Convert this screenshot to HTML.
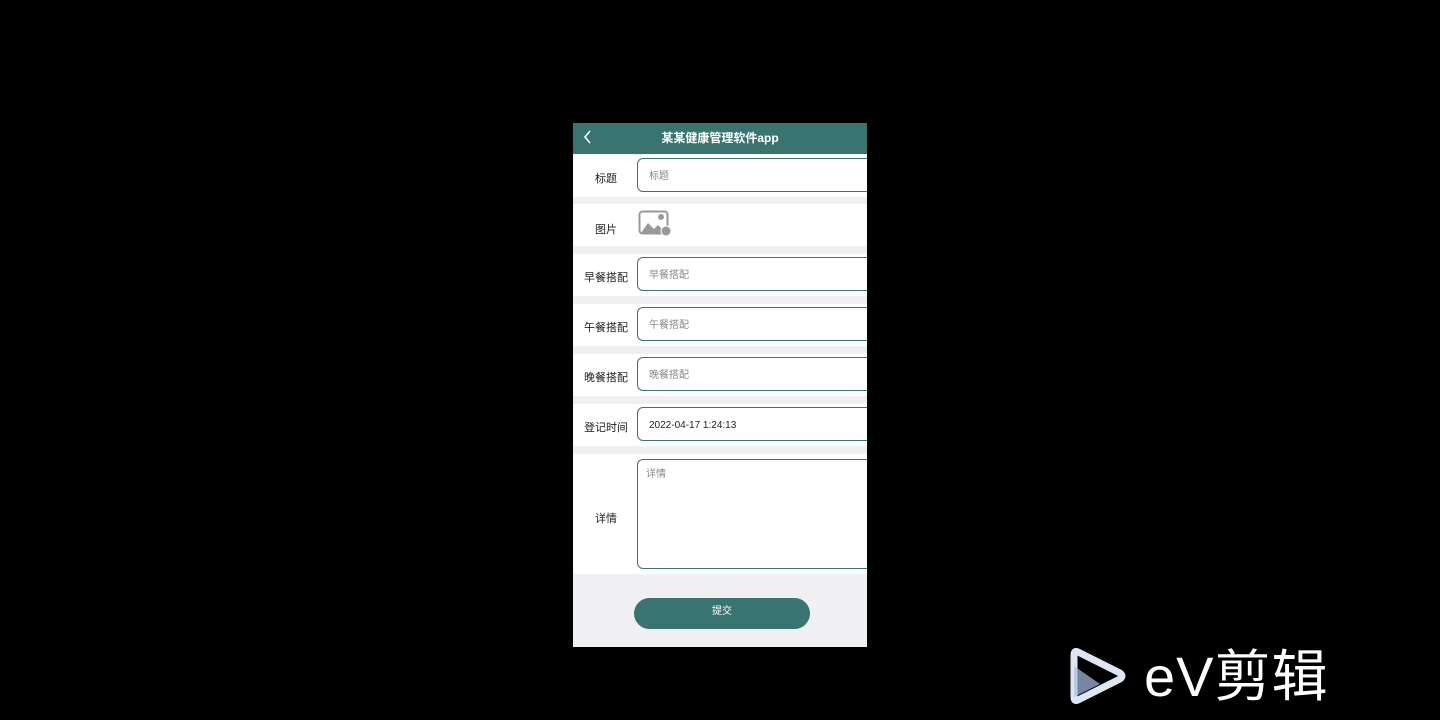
<!DOCTYPE html>
<html><head><meta charset="utf-8"><style>
body{margin:0;width:1440px;height:720px;background:#000;position:relative;overflow:hidden;font-family:"Liberation Sans","Noto Sans CJK SC",sans-serif}
.ph{position:absolute;left:573px;top:123px;width:294px;height:524px;background:#f0eff1;overflow:hidden}
.hd{position:absolute;left:0;top:0;width:294px;height:31px;background:#3a7470;color:#fff;font-size:12px;font-weight:bold;text-align:center;line-height:30px}
.row{position:absolute;left:0;width:294px;height:42px;background:#fff}
.lb{position:absolute;left:0;width:66px;text-align:center;font-size:11px;color:#222;top:15px}
.in{position:absolute;left:64px;top:3px;width:240px;height:32px;border:1px solid #3a7470;border-radius:6px;box-sizing:content-box;font-size:10px;color:#888;line-height:36px;padding-left:11px}
.btn{position:absolute;left:61px;top:475px;width:176px;height:31px;border-radius:16px;background:#3a7470;color:#fff;font-size:10px;text-align:center;line-height:28px}
</style></head><body>
<div class="ph">
<div class="hd"><svg style="position:absolute;left:10px;top:7px" width="10" height="14"><path d="M7 1 L2 7 L7 13" stroke="#fff" stroke-width="1.6" fill="none"/></svg>某某健康管理软件app</div>
<div class="row" style="top:32px"><div class="lb">标题</div><div class="in">标题</div></div>
<div class="row" style="top:81px"><div class="lb" style="top:17px">图片</div>
<svg style="position:absolute;left:65px;top:6px" width="34" height="28"><rect x="1.5" y="1.5" width="28" height="22" rx="3" fill="none" stroke="#999" stroke-width="2"/><path d="M3 23 L10 13 L16 19 L20 15 L28 23Z" fill="#999"/><circle cx="23" cy="7" r="3" fill="#999"/><circle cx="28" cy="21" r="5" fill="#999" stroke="#fff" stroke-width="1"/></svg></div>
<div class="row" style="top:131px"><div class="lb">早餐搭配</div><div class="in">早餐搭配</div></div>
<div class="row" style="top:181px"><div class="lb">午餐搭配</div><div class="in">午餐搭配</div></div>
<div class="row" style="top:231px"><div class="lb">晚餐搭配</div><div class="in">晚餐搭配</div></div>
<div class="row" style="top:281px"><div class="lb">登记时间</div><div class="in" style="color:#222">2022-04-17 1:24:13</div></div>
<div class="row" style="top:331px;height:120px"><div class="lb" style="top:56px">详情</div><div class="in" style="top:5px;height:108px;line-height:30px;padding-left:8px">详情</div></div>
<div class="btn">提交</div>
</div>
<svg style="position:absolute;left:1070px;top:646px" width="56" height="60"><path d="M8 6 Q4 4 4 9 L4 51 Q4 56 8 54 L50 33 Q54 30 50 27 Z" fill="none" stroke="#dfe6f3" stroke-width="7" stroke-linejoin="round"/><path d="M4 20 L4 51 L30 38Z" fill="#a9c0e6" opacity="0.7"/></svg>
<div style="position:absolute;left:1144px;top:642px;color:#fff;font-size:56px;line-height:70px;font-family:'Liberation Sans','Noto Sans CJK SC',sans-serif;letter-spacing:1px">eV剪辑</div>
</body></html>
